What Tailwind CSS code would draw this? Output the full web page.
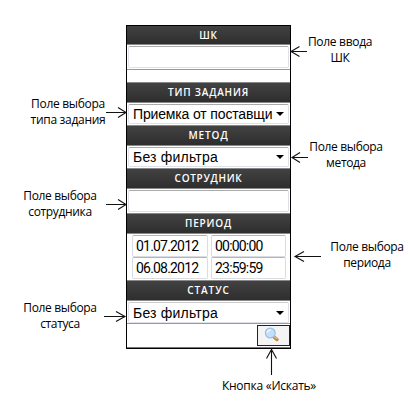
<!DOCTYPE html>
<html lang="ru">
<head>
<meta charset="utf-8">
<title>Фильтр заданий</title>
<script src="https://cdn.jsdelivr.net/npm/@tailwindcss/browser@4"></script>
</head>
<body class="relative h-[406px] w-[410px] overflow-hidden bg-white font-['Open_Sans','Noto_Sans',sans-serif] text-black">
<main class="ml-[126px] pt-[25px]">
  <form class="flex h-[324px] w-[165px] flex-col border border-black bg-white">
    <h2 class="flex h-[19px] shrink-0 items-center justify-center border-b border-[#888] bg-linear-to-b from-[#424242] to-[#2e2e2e] text-[10px] font-semibold tracking-[0.8px] text-white">ШК</h2>
    <div class="h-[25px] shrink-0 border-b border-[#999] px-px pt-px"><div class="h-[22px] rounded-[2px] border border-[#e0e1e8] border-t-[#aaa]"></div></div>
    <div class="h-3 shrink-0"></div>
    <h2 class="flex h-[21px] shrink-0 items-center justify-center border-y border-[#888] bg-linear-to-b from-[#424242] to-[#2e2e2e] text-[10px] font-semibold tracking-[0.8px] text-white">ТИП ЗАДАНИЯ</h2>
    <div class="h-[22px] shrink-0 px-px pt-px"><div class="flex h-5 items-center justify-between rounded-[2px] border border-[#e0e1e8] border-t-[#aaa] pl-1 pr-1"><span class="w-[140px] overflow-hidden whitespace-nowrap font-['Liberation_Sans',sans-serif] text-[14px] leading-5 tracking-[-0.15px]">Приемка от поставщи</span><svg class="shrink-0" width="8" height="4" viewBox="0 0 8 4"><path d="M0 0h8L4 4z"/></svg></div></div>
    <h2 class="flex h-[21px] shrink-0 items-center justify-center border-y border-[#888] bg-linear-to-b from-[#424242] to-[#2e2e2e] text-[10px] font-semibold tracking-[0.9px] text-white">МЕТОД</h2>
    <div class="h-[22px] shrink-0 px-px pt-px"><div class="flex h-5 items-center justify-between rounded-[2px] border border-[#e0e1e8] border-t-[#aaa] pl-1 pr-1"><span class="whitespace-nowrap font-['Liberation_Sans',sans-serif] text-[14px] leading-5 tracking-[0.2px]">Без фильтра</span><svg class="shrink-0" width="8" height="4" viewBox="0 0 8 4"><path d="M0 0h8L4 4z"/></svg></div></div>
    <h2 class="flex h-[21px] shrink-0 items-center justify-center border-y border-[#888] bg-linear-to-b from-[#424242] to-[#2e2e2e] text-[10px] font-semibold tracking-[0.7px] text-white">СОТРУДНИК</h2>
    <div class="h-6 shrink-0 px-px pt-px"><div class="h-[22px] rounded-[2px] border border-[#e0e1e8] border-t-[#aaa]"></div></div>
    <h2 class="flex h-[21px] shrink-0 items-center justify-center border-y border-[#888] bg-linear-to-b from-[#424242] to-[#2e2e2e] text-[10px] font-semibold tracking-[0.8px] text-white">ПЕРИОД</h2>
    <div class="grid h-[46px] shrink-0 grid-cols-[76px_75px] grid-rows-[22px_22px] gap-x-[3px] pl-[5px] pt-px font-['Roboto',sans-serif] text-[14px] leading-[21px] tracking-[-0.8px]">
      <div class="rounded-[2px] border border-[#dadce2] border-t-[#b5b5b5] pl-[3px]">01.07.2012</div><div class="rounded-[2px] border border-[#dadce2] border-t-[#b5b5b5] pl-[3px]">00:00:00</div>
      <div class="rounded-[2px] border border-[#dadce2] border-t-[#b5b5b5] pl-[3px]">06.08.2012</div><div class="rounded-[2px] border border-[#dadce2] border-t-[#b5b5b5] pl-[3px]">23:59:59</div>
    </div>
    <h2 class="flex h-[21px] shrink-0 items-center justify-center border-y border-[#888] bg-linear-to-b from-[#424242] to-[#2e2e2e] text-[10px] font-semibold tracking-[0.9px] text-white">СТАТУС</h2>
    <div class="h-[23px] shrink-0 border-b border-[#999] px-px pt-px"><div class="flex h-[21px] items-center justify-between rounded-[2px] border border-[#e0e1e8] border-t-[#ccc] pl-1 pr-1"><span class="whitespace-nowrap font-['Liberation_Sans',sans-serif] text-[14px] leading-5 tracking-[0.2px]">Без фильтра</span><svg class="shrink-0" width="8" height="4" viewBox="0 0 8 4"><path d="M0 0h8L4 4z"/></svg></div></div>
    <div class="flex h-6 shrink-0 justify-end border-b border-[#777] pt-px">
      <button type="button" aria-label="Искать" class="flex h-[21px] w-[33px] justify-center border border-[#222] bg-[#f4f4f4] pt-px pr-1"><svg width="16" height="16" viewBox="0 0 16 16"><path d="M9.5 9.5l3.500 3" stroke="#b9813f" stroke-width="3.4" stroke-linecap="round"/><path d="M10.5 9.7l2.500 2.1" stroke="#edbd82" stroke-width="1.3" stroke-linecap="round"/><circle cx="6.3" cy="6" r="4.9" fill="#c3e0fb" stroke="#9bbfe8" stroke-width="1.2"/><path d="M3.3 5.800a3.2 3.2 0 0 1 3.5-3" fill="none" stroke="#edf7ff" stroke-width="1.5"/></svg></button>
    </div>
  </form>
</main>
<svg class="absolute inset-0" width="410" height="406" viewBox="0 0 410 406" fill="none" stroke="#111" stroke-width="1.1">
  <path d="M307 51.5H291M299.500 46.500L291 51.500L299.500 56.500"/>
  <path d="M308 157.500H292M300 152.500L292 157.500L300 162.500"/>
  <path d="M321 256.500H295M304 251.500L295 256.500L304 261.500"/>
  <path d="M106 112.500H126M118 107.500L126 112.500L118 117.500"/>
  <path d="M106 204.500H126M118 199.500L126 204.500L118 209.500"/>
  <path d="M104 316.500H125M116 311.500L125 316.500L116 321.500"/>
  <path d="M271.500 375V349.500M266.500 358.500L271.500 349.500L276.500 358.500"/>
</svg>
<p class="absolute left-[300px] top-[34px] w-20 text-center text-[12px] leading-4 tracking-[-0.3px] whitespace-nowrap">Поле ввода<br>ШК</p>
<p class="absolute left-[306px] top-[139px] w-20 text-center text-[12px] leading-4 tracking-[-0.35px] whitespace-nowrap">Поле выбора<br>метода</p>
<p class="absolute left-[327px] top-[239px] w-20 text-center text-[12px] leading-4 tracking-[-0.35px] whitespace-nowrap">Поле выбора<br>периода</p>
<p class="absolute left-[28px] top-[96px] w-20 text-center text-[12px] leading-4 tracking-[-0.3px] whitespace-nowrap">Поле выбора<br>типа задания</p>
<p class="absolute left-[20px] top-[188px] w-20 text-center text-[12px] leading-4 tracking-[-0.35px] whitespace-nowrap">Поле выбора<br>сотрудника</p>
<p class="absolute left-[20px] top-[300px] w-20 text-center text-[12px] leading-4 tracking-[-0.35px] whitespace-nowrap">Поле выбора<br>статуса</p>
<p class="absolute left-[219px] top-[378px] w-[100px] text-center text-[12px] leading-4 tracking-[-0.25px] whitespace-nowrap">Кнопка «Искать»</p>
</body>
</html>
